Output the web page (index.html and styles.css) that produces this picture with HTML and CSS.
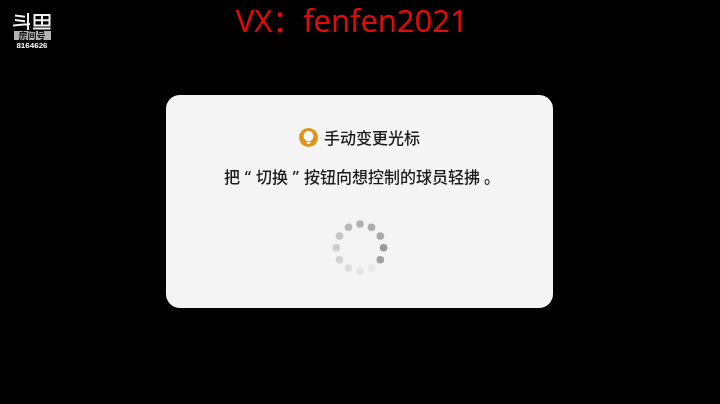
FILE: index.html
```html
<!DOCTYPE html>
<html lang="zh-CN">
<head>
  <meta charset="UTF-8">
  <title>手动变更光标</title>
  <link rel="stylesheet" href="styles.css">
</head>
<body>

  <header class="top">
    <div class="logo">
      <svg class="logo-mark" width="38" height="17" viewBox="0 0 38 17" fill="none" stroke="#f2f2f2" stroke-width="2">
        <path d="M2 2.500l10 1.200M2 7l10 1.200M0 12.600l17-1.600M15 0v17"/>
        <path d="M21.500 2h15v10.500h-15zM21.500 7.200h15M29 2v10.500M20 15.600h17.500"/>
      </svg>
      <div class="logo-tag">房间号</div>
      <div class="logo-room">8164626</div>
    </div>
    <div class="watermark">VX：fenfen2021</div>
  </header>

  <main class="card">
    <div class="tip-title">
      <svg class="tip-icon" width="19" height="19" viewBox="0 0 19 19">
        <circle cx="9.5" cy="9.5" r="9.5" fill="#dd9418"/>
        <path d="M9.500 3a5 5 0 0 0-2.900 9c.4.300.7.700.7 1.100h4.400c0-.4.300-.8.700-1.100a5 5 0 0 0-2.900-9z" fill="#fff"/>
        <rect x="7.600" y="13.700" width="3.800" height="2" rx=".8" fill="#fff"/>
      </svg>
      <span>手动变更光标</span>
    </div>
    <p class="tip-text">把<span class="quote">“</span>切换<span class="quote">”</span>按钮向想控制的球员轻拂 。</p>
    <svg class="spinner" width="60" height="60" viewBox="0 0 60 60">
      <circle cx="30" cy="6" r="3.8" fill="#b0b0b0"/>
      <circle cx="41.5" cy="9.3" r="3.8" fill="#acacac"/>
      <circle cx="50.3" cy="18" r="3.8" fill="#a8a8a8"/>
      <circle cx="53.6" cy="29.8" r="3.8" fill="#9a9a9a"/>
      <circle cx="50.3" cy="41.7" r="3.8" fill="#a0a0a0"/>
      <circle cx="41.5" cy="50" r="3.8" fill="#e8e8e8"/>
      <circle cx="30" cy="53" r="3.8" fill="#e4e4e4"/>
      <circle cx="18.5" cy="50" r="3.8" fill="#dcdcdc"/>
      <circle cx="9.5" cy="41.7" r="3.8" fill="#d4d4d4"/>
      <circle cx="6.2" cy="29.8" r="3.8" fill="#cccccc"/>
      <circle cx="9.5" cy="18" r="3.8" fill="#c4c4c4"/>
      <circle cx="18.5" cy="9.3" r="3.8" fill="#b8b8b8"/>
    </svg>
  </main>

</body>
</html>
```

FILE: styles.css
```css
html, body {
  height: 100%;
}

body {
  margin: 0;
  background-color: #000;
  font-family: "Noto Sans CJK SC", "Noto Sans", sans-serif;
  overflow: hidden;
}

.top {
  display: grid;
  grid-template-columns: 1fr auto 1fr;
  height: 95px;
}

.logo {
  display: flex;
  flex-direction: column;
  align-items: center;
  width: 38px;
  margin-left: 13px;
  padding-top: 13px;
  color: #fff;
  filter: blur(.4px);
}

.logo-tag {
  width: 37px;
  margin-top: 1px;
  background-color: #b4b4b4;
  color: #111;
  font-size: 9px;
  font-weight: 700;
  line-height: 9px;
  text-align: center;
}

.logo-room {
  margin-top: 1px;
  font-family: "Liberation Sans", sans-serif;
  font-size: 8px;
  font-weight: 700;
  line-height: 9px;
}

.watermark {
  grid-column: 2;
  padding-right: 17px;
  color: #e00c0c;
  font-family: "Open Sans", "Noto Sans CJK SC", sans-serif;
  font-size: 31px;
  line-height: 40px;
}

.card {
  display: flex;
  flex-direction: column;
  align-items: center;
  box-sizing: border-box;
  width: 387px;
  height: 213px;
  margin-left: 166px;
  padding-top: 32px;
  background-color: #f4f4f4;
  border-radius: 14px;
}

.tip-title {
  display: flex;
  align-items: center;
  gap: 6px;
  color: #1c1c1c;
  font-size: 16px;
  font-weight: 500;
  line-height: 20px;
  filter: blur(.3px);
}

.tip-text {
  margin: 20px 0 0 5px;
  color: #1c1c1c;
  font-family: "Noto Sans", "Noto Sans CJK SC", sans-serif;
  font-size: 16px;
  font-weight: 500;
  line-height: 20px;
  filter: blur(.3px);
}

.quote {
  display: inline-block;
  width: 16px;
  text-align: center;
}

.spinner {
  margin-top: 31px;
  filter: blur(.4px);
}
```
